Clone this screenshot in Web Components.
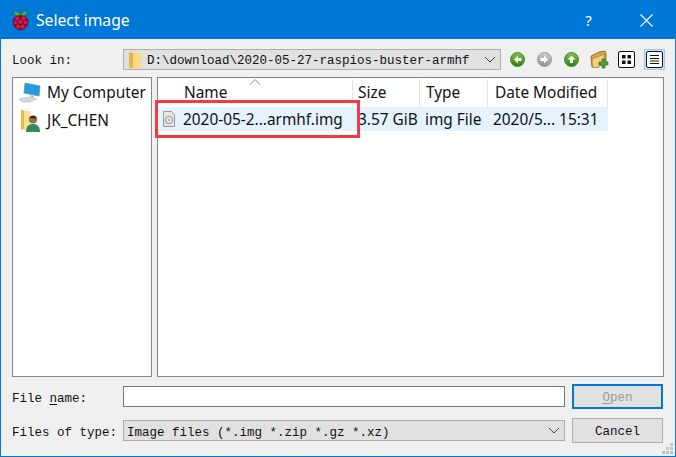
<!DOCTYPE html>
<html>
<head>
<meta charset="utf-8">
<title>Select image</title>
<style>
  html, body { margin: 0; padding: 0; background: #f0f0f0; }
  body { width: 676px; height: 457px; overflow: hidden; }
</style>
</head>
<body>
<select-dialog></select-dialog>
<script>
const MONO = '"Liberation Mono", monospace';
const SANS = '"Noto Sans", sans-serif';
const chevron = `<svg width="12" height="7" viewBox="0 0 12 7"><path d="M1 1l5 5 5-5" fill="none" stroke="#444" stroke-width="1"/></svg>`;

class TitleBar extends HTMLElement {
  constructor() {
    super();
    this.attachShadow({ mode: "open" });
    this.shadowRoot.innerHTML = `
      <style>
        :host { display: flex; align-items: center; height: 38px; background: #0078d7; color: #fff;
          font: 15.7px ${SANS}; box-sizing: border-box; padding-left: 10px; }
        svg { display: block; }
        .name { margin-left: 6px; margin-top: -1px; flex: 1; }
        .help { width: 45px; text-align: center; font-size: 15px; margin-right: 13px; margin-top: -1px; }
        .close { width: 45px; display: flex; justify-content: center; margin-right: 6px; }
      </style>
      <svg width="19" height="21" viewBox="0 0 18 20">
        <path d="M9 5.5C7.5 2 4 .5 2.5 1.5 3 4 5.500 6 9 6c3.500 0 6-2 6.500-4.500C14 .5 10.500 2 9 5.500z" fill="#62b82f" stroke="#2c6a16" stroke-width=".6"/>
        <path d="M9 5c4.200 0 7.500 2 7.500 6 0 4-3.500 8.500-7.500 8.500S1.500 15 1.500 11c0-4 3.300-6 7.500-6z" fill="#7d0c2e"/>
        <g fill="#cf1b50">
          <circle cx="6" cy="8" r="1.900"/><circle cx="12" cy="8" r="1.900"/>
          <circle cx="9" cy="11.300" r="2.100"/><circle cx="4.300" cy="12" r="1.700"/><circle cx="13.700" cy="12" r="1.700"/>
          <circle cx="6.800" cy="15.700" r="1.800"/><circle cx="11.200" cy="15.700" r="1.800"/>
        </g>
      </svg>
      <span class="name">Select image</span>
      <span class="help">?</span>
      <span class="close"><svg width="13" height="13" viewBox="0 0 13 13"><path d="M.5.5l12 12M12.500.5l-12 12" stroke="#fff" stroke-width="1.100"/></svg></span>`;
  }
}

class ComboBox extends HTMLElement {
  constructor() {
    super();
    this.attachShadow({ mode: "open" });
    this.shadowRoot.innerHTML = `
      <style>
        :host { display: flex; align-items: center; height: 21px; box-sizing: border-box;
          background: #e1e1e1; border: 1px solid #adadad; font: 12.5px ${MONO}; color: #111; min-width: 0; }
        .text { flex: 1; white-space: pre; display: flex; align-items: center; }
        .arrow { width: 20px; display: flex; justify-content: center; }
      </style>
      <span class="text"><slot></slot></span>
      <span class="arrow">${chevron}</span>`;
  }
}

class NavIcon extends HTMLElement {
  constructor() {
    super();
    this.attachShadow({ mode: "open" });
    const kind = this.getAttribute("kind");
    const dark = kind === "off" ? "#8f8f8f" : "#2f7d16";
    const light = kind === "off" ? "#cfcfcf" : "#7fc64a";
    const arrows = {
      back: "M8 3.500L4 7.500l4 4V9h3.500V6H8z",
      off: "M7 3.500l4 4-4 4V9H3.500V6H7z",
      up: "M7.500 3.500l4 4H9v3.500H6V7.500H3.500z",
    };
    const id = "g" + kind;
    this.shadowRoot.innerHTML = `
      <style>:host { display: block; width: 15px; height: 15px; } svg { display: block; }</style>
      <svg width="15" height="15" viewBox="0 0 15 15">
        <defs><linearGradient id="${id}" x1="0" y1="0" x2="0" y2="1"><stop offset="0" stop-color="${light}"/><stop offset="1" stop-color="${dark}"/></linearGradient></defs>
        <circle cx="7.500" cy="7.500" r="7" fill="url(#${id})" stroke="${dark}" stroke-width=".8"/>
        <path d="${arrows[kind]}" fill="#fff"/>
      </svg>`;
  }
}

class ToolBar extends HTMLElement {
  constructor() {
    super();
    this.attachShadow({ mode: "open" });
    this.shadowRoot.innerHTML = `
      <style>
        :host { display: flex; align-items: center; height: 21px; flex: none; margin-left: 9px; }
        svg { display: block; }
        nav-icon { margin-right: 12px; }
        .folder { margin-left: -1px; margin-right: 9px; }
        .view { width: 17px; height: 17px; box-sizing: border-box; background: #fff; border: 1px solid #111; border-radius: 2px;
          display: flex; align-items: center; justify-content: center; }
        .on { width: 21px; height: 21px; box-sizing: border-box; margin-left: 9px; background: #cce4f7; border: 1px solid #9cc9ee;
          display: flex; align-items: center; justify-content: center; }
      </style>
      <nav-icon kind="back"></nav-icon>
      <nav-icon kind="off"></nav-icon>
      <nav-icon kind="up"></nav-icon>
      <svg class="folder" width="19" height="19" viewBox="0 0 19 19">
        <path d="M1 6l8-4 6-1 1 3v8l-8 5H2z" fill="#d9a848" stroke="#7a5c1c" stroke-width=".8"/>
        <path d="M2 9l12-5 1 8-7 5.500H2.500z" fill="#f3cd7c" stroke="#94722a" stroke-width=".6"/>
        <path d="M12 9h3v3h3v3h-3v3h-3v-3H9v-3h3z" fill="#4aa83a" stroke="#1f6a1c" stroke-width=".6"/>
      </svg>
      <span class="view">
        <svg width="9" height="9" viewBox="0 0 9 9" fill="#111"><rect width="3.500" height="3.500"/><rect x="5.500" width="3.500" height="3.500"/><rect y="5.500" width="3.500" height="3.500"/><rect x="5.500" y="5.500" width="3.500" height="3.500"/></svg>
      </span>
      <span class="on"><span class="view">
        <svg width="9" height="9" viewBox="0 0 9 9" stroke="#111" stroke-width="1"><path d="M0 .5h9M0 3.500h9M0 6h9M0 8.500h9"/></svg>
      </span></span>`;
  }
}

class SidePanel extends HTMLElement {
  constructor() {
    super();
    this.attachShadow({ mode: "open" });
    this.shadowRoot.innerHTML = `
      <style>
        :host { display: block; box-sizing: border-box; background: #fff; border: 1px solid #828790;
          font: 15.4px ${SANS}; color: #111; }
        .item { display: flex; align-items: center; height: 28px; padding-left: 5px; }
        svg { display: block; flex: none; margin-right: 5px; }
        span { white-space: nowrap; }
      </style>
      <div class="item">
        <svg width="24" height="24" viewBox="0 0 24 24">
          <path d="M7 3l15 3-1 10-15-3z" fill="#1f9be0" stroke="#7d8b96" stroke-width=".8"/>
          <path d="M12 15l4 1v2l-4-1z" fill="#b9c0c6"/>
          <path d="M1 19l9-2 9 2-7 3H4z" fill="#d5d9dc" stroke="#a9afb5" stroke-width=".5"/>
        </svg>
        <span>My Computer</span>
      </div>
      <div class="item">
        <svg width="24" height="24" viewBox="0 0 24 24">
          <path d="M3 2l5 1v17l-5 2z" fill="#e8b94a"/>
          <path d="M6 3h6v19H6z" fill="#fbe08f"/>
          <circle cx="15" cy="11.500" r="4" fill="#a06a44"/>
          <path d="M11.500 10c1-3 6.500-3 7 .5z" fill="#33261c"/>
          <path d="M8 24c0-6 3-8 7-8s7 2 7 8z" fill="#2f8a5c"/>
        </svg>
        <span>JK_CHEN</span>
      </div>`;
  }
}

class FileTable extends HTMLElement {
  constructor() {
    super();
    this.attachShadow({ mode: "open" });
    this.shadowRoot.innerHTML = `
      <style>
        :host { display: block; position: relative; box-sizing: border-box; background: #fff; border: 1px solid #828790;
          font: 15.4px ${SANS}; color: #111; padding-top: 1px; }
        .row { display: grid; grid-template-columns: 195px 67px 68px 120px; width: 450px; }
        .head { height: 28px; }
        .head span { display: flex; align-items: center; padding-left: 5px; padding-bottom: 2px; border-right: 1px solid #e5e5e5; box-sizing: border-box; }
        .head span:first-child { padding-left: 26px; }
        .head span:nth-child(3) { padding-left: 6px; }
        .head span:nth-child(4) { padding-left: 7px; }
        .body { height: 24px; background: #e5f3ff; }
        .body span { display: flex; align-items: center; white-space: nowrap; padding-left: 5px; }
        .body span:first-child { padding-left: 4px; }
        .body svg { margin-right: 7px; flex: none; }
        .sort { position: absolute; left: 91px; top: 1px; display: block; }
        .mark { position: absolute; left: -3px; top: 22px; width: 205px; height: 38px; box-sizing: border-box; border: 3px solid #f63a3f; }
      </style>
      <div class="row head"><span>Name</span><span>Size</span><span>Type</span><span>Date Modified</span></div>
      <div class="row body">
        <span>
          <svg width="14" height="16" viewBox="0 0 14 16">
            <path d="M1.500.5h8l3 3v12h-11z" fill="#e6e6e6" stroke="#9a9a9a"/>
            <circle cx="7" cy="9" r="3.600" fill="none" stroke="#a8a8a8" stroke-width="1.400"/>
            <circle cx="7" cy="9" r="1" fill="#a0a0a0"/>
          </svg>2020-05-2...armhf.img</span>
        <span>3.57 GiB</span><span>img File</span><span>2020/5... 15:31</span>
      </div>
      <svg class="sort" width="12" height="6" viewBox="0 0 12 6"><path d="M1 5.500l5-5 5 5" fill="none" stroke="#8a8a8a"/></svg>
      <div class="mark"></div>`;
  }
}

class DlgButton extends HTMLElement {
  constructor() {
    super();
    this.attachShadow({ mode: "open" });
    this.shadowRoot.innerHTML = `
      <style>
        :host { display: flex; align-items: center; justify-content: center; box-sizing: border-box; height: 25px;
          background: #e1e1e1; border: 1px solid #adadad; font: 12.5px ${MONO}; color: #111; padding-top: 2px; }
        :host([default]) { border: 2px solid #0078d7; color: #9a9a9a; }
      </style>
      <slot></slot>`;
  }
}

class SelectDialog extends HTMLElement {
  constructor() {
    super();
    this.attachShadow({ mode: "open" });
    this.shadowRoot.innerHTML = `
      <style>
        :host { display: block; position: relative; width: 676px; height: 457px; box-sizing: border-box;
          border: 1px solid #0078d7; background: #f0f0f0; font: 12.5px ${MONO}; color: #111; }
        .content { padding: 10px 11px 0 11px; display: flex; flex-direction: column; }
        .look { display: grid; grid-template-columns: 111px 378px auto; align-items: center; height: 21px; }
        .look > span { padding-top: 2px; }
        .panes { display: grid; grid-template-columns: 140px 507px; gap: 5px; height: 300px; margin-top: 7px; }
        .form { display: grid; grid-template-columns: 111px 442px 91px; column-gap: 0; row-gap: 9px; margin-top: 7px; align-items: center; }
        .form > span { padding-top: 4px; }
        .form dlg-button { margin-left: 7px; width: 91px; }
        .input { height: 21px; box-sizing: border-box; background: #fff; border: 1px solid #7a7a7a; }
        .path { display: flex; align-items: center; padding-left: 5px; }
        .path b { font-weight: normal; padding-top: 2px; }
        .path svg { margin-right: 6px; display: block; }
        .type { padding: 4px 0 0 3px; }
        u { text-underline-offset: 2px; }
        .grip { position: absolute; right: 1px; bottom: 1px; display: block; }
      </style>
      <title-bar></title-bar>
      <div class="content">
        <div class="look">
          <span>Look in:</span>
          <combo-box><span class="path"><svg width="12" height="17" viewBox="0 0 12 17"><path d="M0 1l4 1v15H0z" fill="#e5b545"/><path d="M4 2h8v15H4z" fill="#fcd97f"/></svg><b>D:\\download\\2020-05-27-raspios-buster-armhf</b></span></combo-box>
          <tool-bar></tool-bar>
        </div>
        <div class="panes">
          <side-panel></side-panel>
          <file-table></file-table>
        </div>
        <div class="form">
          <span>File <u>n</u>ame:</span>
          <div class="input"></div>
          <dlg-button default><span><u>O</u>pen</span></dlg-button>
          <span>Files of type:</span>
          <combo-box><span class="type">Image files (*.img *.zip *.gz *.xz)</span></combo-box>
          <dlg-button>Cancel</dlg-button>
        </div>
      </div>
      <svg class="grip" width="12" height="12" viewBox="0 0 12 12" fill="#c4c4c4">
        <rect x="8" y="0" width="3" height="3"/><rect x="4" y="4" width="3" height="3"/><rect x="8" y="4" width="3" height="3"/>
        <rect x="0" y="8" width="3" height="3"/><rect x="4" y="8" width="3" height="3"/><rect x="8" y="8" width="3" height="3"/>
      </svg>`;
  }
}

customElements.define("title-bar", TitleBar);
customElements.define("combo-box", ComboBox);
customElements.define("nav-icon", NavIcon);
customElements.define("tool-bar", ToolBar);
customElements.define("side-panel", SidePanel);
customElements.define("file-table", FileTable);
customElements.define("dlg-button", DlgButton);
customElements.define("select-dialog", SelectDialog);
</script>
</body>
</html>
